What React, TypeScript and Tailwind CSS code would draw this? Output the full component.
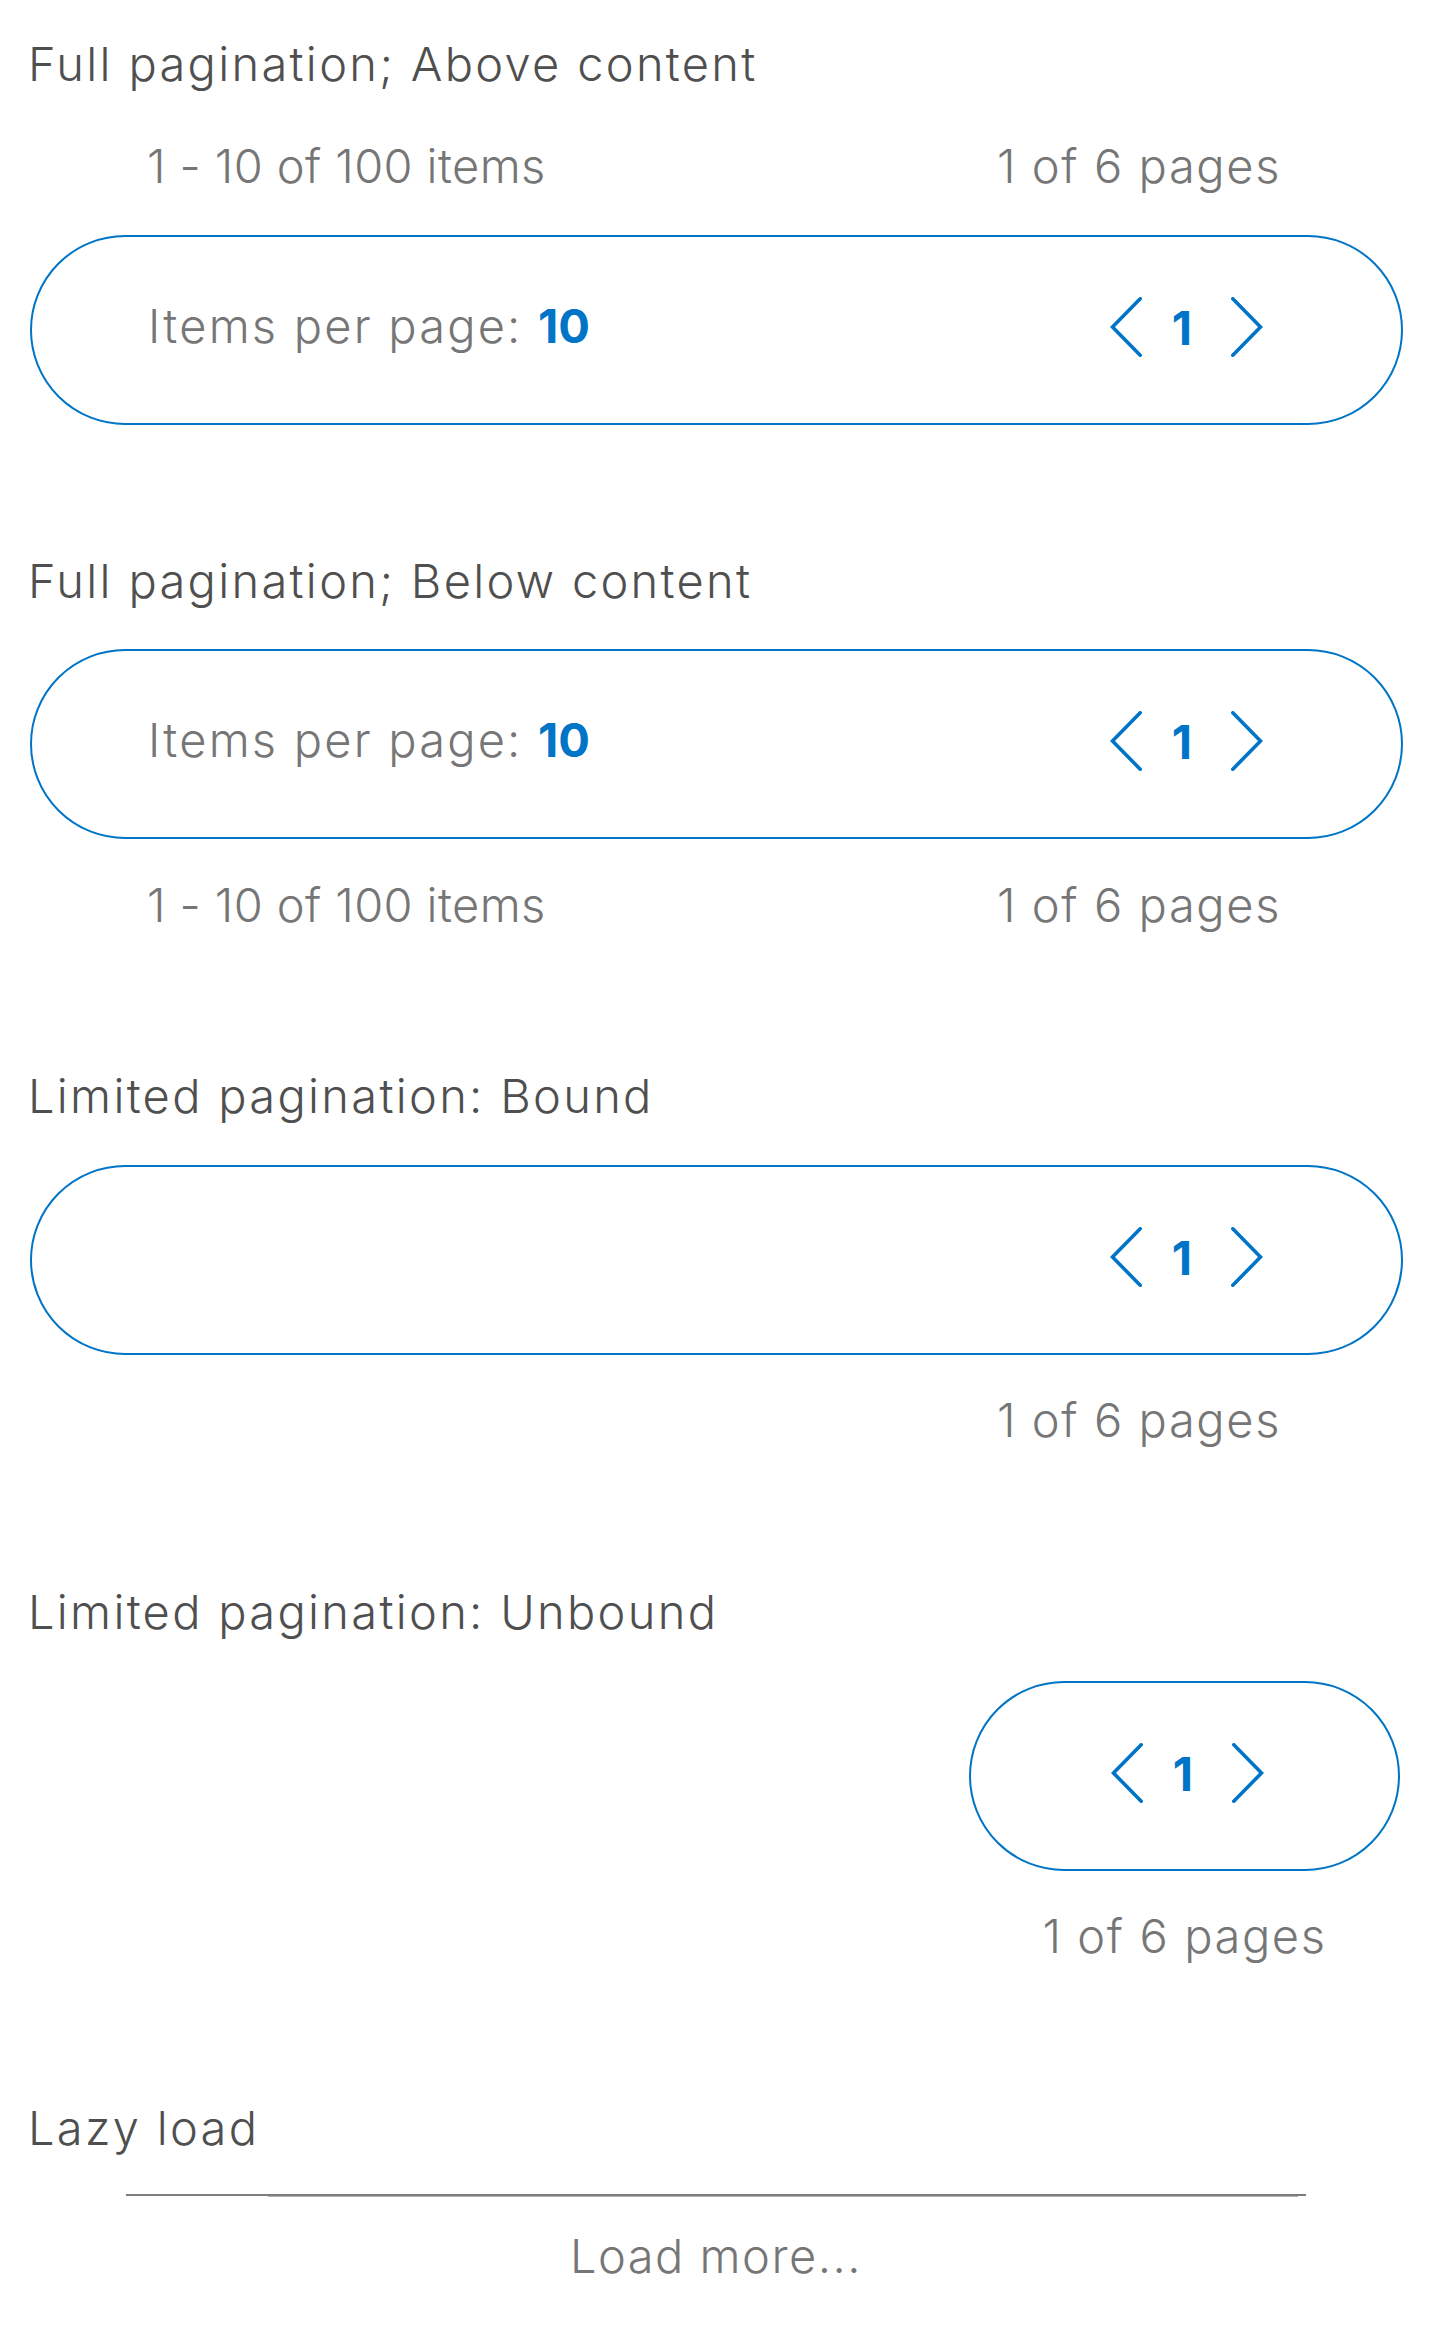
import React from "react";

function ChevronLeft() {
  return (
    <svg width="32" height="60" viewBox="0 0 32 60" fill="none" className="block">
      <path d="M30.2 1.8 L2.5 30 L30.2 58.2" stroke="#0074c6" strokeWidth="3.6" strokeLinecap="round" strokeLinejoin="miter" />
    </svg>
  );
}

function ChevronRight() {
  return (
    <svg width="32" height="60" viewBox="0 0 32 60" fill="none" className="block">
      <path d="M1.8 1.8 L29.5 30 L1.8 58.2" stroke="#0074c6" strokeWidth="3.6" strokeLinecap="round" strokeLinejoin="miter" />
    </svg>
  );
}

function Pager() {
  return (
    <div className="flex items-center mt-[4px]">
      <ChevronLeft />
      <div className="w-[89px] pr-[9px] text-center font-bold text-[#0074c6] leading-[57px]">1</div>
      <ChevronRight />
    </div>
  );
}

function Title({ children, className = "" }: { children: React.ReactNode; className?: string }) {
  return (
    <div className={`pl-[28px] text-[#4f4f4f] font-light leading-[57px] tracking-[2.3px] ${className}`}>
      {children}
    </div>
  );
}

function InfoRow({ className = "" }: { className?: string }) {
  return (
    <div className={`ml-[147px] w-[1134px] flex justify-between text-[#767676] font-light leading-[57px] ${className}`}>
      <span className="tracking-[0.4px]">1 - 10 of 100 items</span>
      <span className="tracking-[1.6px]">1 of 6 pages</span>
    </div>
  );
}

function FullPill({ className = "" }: { className?: string }) {
  return (
    <div
      className={`ml-[30px] w-[1373px] h-[190px] rounded-full border-2 border-[#0074c6] flex items-center justify-between pl-[116px] pr-[138px] pb-[10px] ${className}`}
    >
      <div className="font-light text-[#767676] leading-[57px] tracking-[2.2px]">
        Items per page: <span className="font-bold text-[#0074c6] tracking-[0px]">10</span>
      </div>
      <Pager />
    </div>
  );
}

export default function App() {
  return (
    <div className="w-[1431px] min-h-[2325px] bg-white text-[47px] font-['Inter',sans-serif] pt-[35px] pb-[40px]">
      {/* Section 1 */}
      <Title>Full pagination; Above content</Title>
      <InfoRow className="mt-[45px]" />
      <FullPill className="mt-[41px]" />

      {/* Section 2 */}
      <Title className="mt-[127px]">Full pagination; Below content</Title>
      <FullPill className="mt-[40px]" />
      <InfoRow className="mt-[37px]" />

      {/* Section 3 */}
      <Title className="mt-[134px]">Limited pagination: Bound</Title>
      <div className="mt-[41px] ml-[30px] w-[1373px] h-[190px] rounded-full border-2 border-[#0074c6] flex items-center justify-end pr-[138px] pb-[10px]">
        <Pager />
      </div>
      <div className="mt-[36px] ml-[147px] w-[1134px] flex justify-end text-[#767676] font-light leading-[57px]">
        <span className="tracking-[1.6px]">1 of 6 pages</span>
      </div>

      {/* Section 4 */}
      <Title className="mt-[135px]">Limited pagination: Unbound</Title>
      <div className="flex justify-end pr-[31px] mt-[41px]">
        <div className="w-[431px]">
          <div className="h-[190px] rounded-full border-2 border-[#0074c6] flex items-center justify-center pl-[6px] pb-[10px]">
            <Pager />
          </div>
          <div className="mt-[36px] text-center text-[#767676] font-light leading-[57px] tracking-[1.6px]">1 of 6 pages</div>
        </div>
      </div>

      {/* Section 5 */}
      <Title className="mt-[135px] tracking-[1.6px]">Lazy load</Title>
      <div className="mt-[38px] ml-[126px] w-[1180px]">
        <div className="h-[2px] bg-[#7d7d7d]" />
        <div className="ml-[142px] w-[1030px] h-[1px] bg-[#b3b3b3]" />
        <div className="mt-[30px] text-center text-[#767676] font-light leading-[57px] tracking-[1.5px]">Load more...</div>
      </div>
    </div>
  );
}
